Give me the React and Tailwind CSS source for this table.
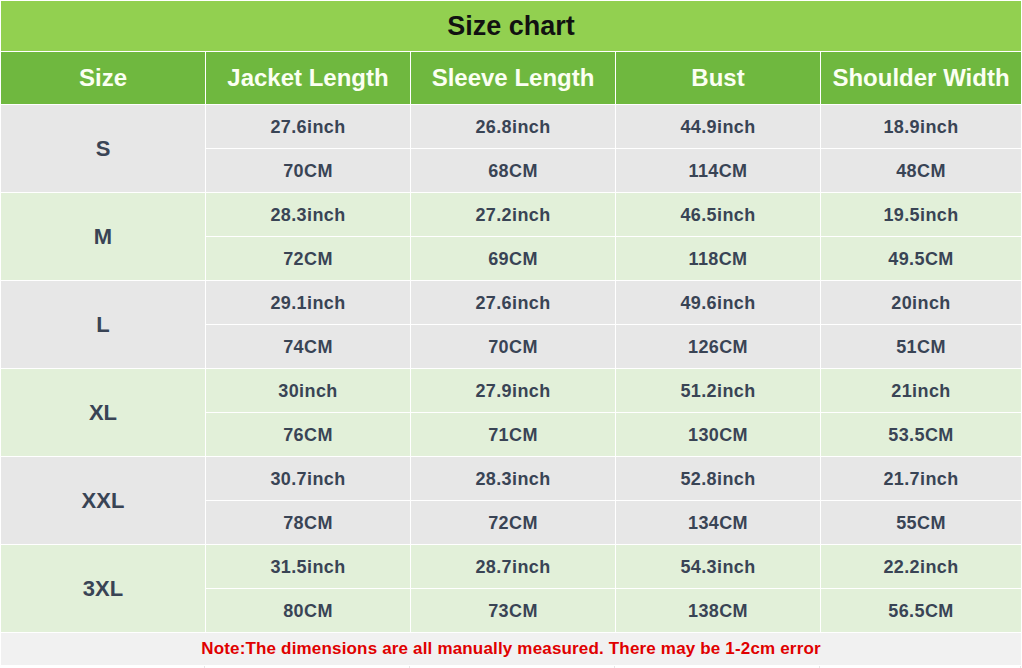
import React from "react";

const rows = [
  { size: "S", inch: ["27.6inch", "26.8inch", "44.9inch", "18.9inch"], cm: ["70CM", "68CM", "114CM", "48CM"] },
  { size: "M", inch: ["28.3inch", "27.2inch", "46.5inch", "19.5inch"], cm: ["72CM", "69CM", "118CM", "49.5CM"] },
  { size: "L", inch: ["29.1inch", "27.6inch", "49.6inch", "20inch"], cm: ["74CM", "70CM", "126CM", "51CM"] },
  { size: "XL", inch: ["30inch", "27.9inch", "51.2inch", "21inch"], cm: ["76CM", "71CM", "130CM", "53.5CM"] },
  { size: "XXL", inch: ["30.7inch", "28.3inch", "52.8inch", "21.7inch"], cm: ["78CM", "72CM", "134CM", "55CM"] },
  { size: "3XL", inch: ["31.5inch", "28.7inch", "54.3inch", "22.2inch"], cm: ["80CM", "73CM", "138CM", "56.5CM"] },
];

const headers = ["Size", "Jacket Length", "Sleeve Length", "Bust", "Shoulder Width"];

const App = () => {
  return (
    <div
      className="w-[1022px] h-[668px] overflow-hidden bg-white"
      style={{ fontFamily: '"Liberation Sans", Arial, sans-serif' }}
    >
      <div className="grid grid-cols-[204px_204px_204px_204px_200px] gap-px p-px bg-white">
        {/* Title */}
        <div className="col-span-5 h-[50px] bg-[#92d050] flex items-center justify-center text-[27px] font-bold text-[#111]">
          Size chart
        </div>

        {/* Header */}
        {headers.map((h) => (
          <div
            key={h}
            className="h-[52px] bg-[#6fb83f] flex items-center justify-center text-[24px] font-bold text-[#fbfff2]"
          >
            {h}
          </div>
        ))}

        {/* Body */}
        {rows.map((r, i) => {
          const bg = i % 2 === 0 ? "bg-[#e7e7e7]" : "bg-[#e2f0d9]";
          return (
            <React.Fragment key={r.size}>
              <div
                className={`row-span-2 ${bg} flex items-center justify-center text-[22px] font-bold text-[#394455]`}
              >
                {r.size}
              </div>
              {r.inch.map((v, j) => (
                <div
                  key={"i" + j}
                  className={`h-[43px] ${bg} flex items-center justify-center pt-px text-[18px] tracking-[0.4px] font-bold text-[#394455]`}
                >
                  {v}
                </div>
              ))}
              {r.cm.map((v, j) => (
                <div
                  key={"c" + j}
                  className={`h-[43px] ${bg} flex items-center justify-center pt-px text-[18px] tracking-[0.4px] font-bold text-[#394455]`}
                >
                  {v}
                </div>
              ))}
            </React.Fragment>
          );
        })}

        {/* Note */}
        <div className="col-span-5 h-[32px] bg-[#f1f1f1] flex items-center justify-center text-[17px] tracking-[0.17px] font-bold text-[#e00000]">
          Note:The dimensions are all manually measured. There may be 1-2cm error
        </div>

        {/* cut-off last row */}
        {headers.map((h) => (
          <div key={"x" + h} className="h-[20px] bg-white border-r border-[#e6e6e6]" />
        ))}
      </div>
    </div>
  );
};

export default App;
